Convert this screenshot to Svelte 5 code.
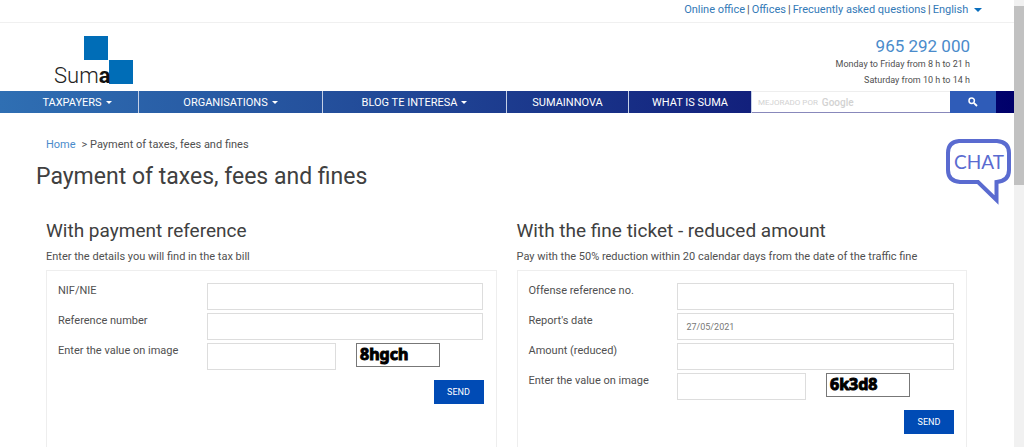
<script>
    const topLinks = ['Online office', 'Offices', 'Frecuently asked questions'];

    const menu = [
        { label: 'TAXPAYERS', dropdown: true },
        { label: 'ORGANISATIONS', dropdown: true },
        { label: 'BLOG TE INTERESA', dropdown: true },
        { label: 'SUMAINNOVA', dropdown: false },
        { label: 'WHAT IS SUMA', dropdown: false }
    ];

    let forms = [
        {
            id: 'reference',
            title: 'With payment reference',
            description: 'Enter the details you will find in the tax bill',
            fields: [
                { name: 'nif', label: 'NIF/NIE', value: '' },
                { name: 'number', label: 'Reference number', value: '' }
            ],
            captcha: '8hgch',
            answer: ''
        },
        {
            id: 'ticket',
            title: 'With the fine ticket - reduced amount',
            description: 'Pay with the 50% reduction within 20 calendar days from the date of the traffic fine',
            fields: [
                { name: 'offense', label: 'Offense reference no.', value: '' },
                { name: 'date', label: "Report's date", value: '27/05/2021' },
                { name: 'amount', label: 'Amount (reduced)', value: '' }
            ],
            captcha: '6k3d8',
            answer: ''
        }
    ];
</script>

<div class="window">
    <div class="page">
        <div class="top-bar">
            {#each topLinks as link}
                <a href="#top">{link}</a><span class="sep">|</span>
            {/each}
            <button class="language">English <span class="caret"></span></button>
        </div>

        <header>
            <a href="#home" class="logo" aria-label="Suma">
                <svg width="80" height="54" viewBox="0 0 80 54">
                    <rect x="30" y="0" width="24" height="24" fill="#006db7" />
                    <rect x="55" y="24" width="24" height="24" fill="#006db7" />
                    <text x="0" y="47" font-size="22" font-weight="300" fill="#222">Sum<tspan font-weight="700" fill="#111">a</tspan></text>
                </svg>
            </a>
            <div class="contact">
                <a href="#phone" class="phone">965 292 000</a>
                <span>Monday to Friday from 8 h to 21 h</span>
                <span>Saturday from 10 h to 14 h</span>
            </div>
        </header>

        <nav>
            {#each menu as item}
                <a href="#menu" class="item">
                    {item.label}
                    {#if item.dropdown}<span class="caret"></span>{/if}
                </a>
            {/each}
            <label class="search">
                <span class="by">MEJORADO POR</span>
                <span class="google">Google</span>
                <input type="text" aria-label="Search" />
            </label>
            <button class="search-button" aria-label="Search">
                <svg width="10" height="10" viewBox="0 0 10 10" fill="none" stroke="#fff">
                    <circle cx="3.7" cy="3.7" r="2.7" stroke-width="1.5" />
                    <path d="M5.8 5.8L9 9" stroke-width="1.8" />
                </svg>
            </button>
        </nav>

        <main>
            <div class="breadcrumb">
                <a href="#home">Home</a>
                <span>&gt; Payment of taxes, fees and fines</span>
            </div>
            <h1>Payment of taxes, fees and fines</h1>

            <div class="columns">
                {#each forms as form}
                    <section>
                        <h2>{form.title}</h2>
                        <p>{form.description}</p>
                        <form on:submit|preventDefault>
                            {#each form.fields as field}
                                <div class="row">
                                    <label for="{form.id}-{field.name}">{field.label}</label>
                                    <input id="{form.id}-{field.name}" type="text" bind:value={field.value} />
                                </div>
                            {/each}
                            <div class="row">
                                <label for="{form.id}-captcha">Enter the value on image</label>
                                <div class="captcha">
                                    <input id="{form.id}-captcha" type="text" bind:value={form.answer} />
                                    <svg width="84" height="24" viewBox="0 0 84 24">
                                        <rect x="0.5" y="0.5" width="83" height="23" fill="#fff" stroke="#777" />
                                        <text x="4" y="17">{form.captcha}</text>
                                    </svg>
                                </div>
                            </div>
                            <button class="send">SEND</button>
                        </form>
                    </section>
                {/each}
            </div>
        </main>

        <button class="chat" aria-label="CHAT">
            <svg width="68" height="68" viewBox="0 0 68 68">
                <path
                    d="M14 3H52Q64 4 64 15V32Q64 43 51.5 44V62L33 44H15Q3 43 3 32V15Q3 4 14 3Z"
                    fill="#fff"
                    stroke="#5a6bd0"
                    stroke-width="4"
                />
                <text x="34" y="31" text-anchor="middle" font-size="19" fill="#5a6bd0">CHAT</text>
            </svg>
        </button>
    </div>
    <div class="scrollbar"><span class="thumb"></span></div>
</div>

<style>
:global(body) {
    margin: 0;
    background: #fff;
}
.window {
    display: flex;
    height: 100vh;
    overflow: hidden;
    font-family: Roboto, "Noto Sans", sans-serif;
    font-size: 11px;
    color: #505050;
}
.page {
    position: relative;
    display: flex;
    flex-direction: column;
    flex: 1;
    min-width: 0;
}
a {
    color: #337ab7;
    text-decoration: none;
}
button {
    font-family: inherit;
    border: none;
    padding: 0;
    cursor: pointer;
}
input {
    box-sizing: border-box;
    min-width: 0;
    font-family: inherit;
    outline: none;
}
.caret {
    display: inline-block;
    border: 3px solid transparent;
    border-top-color: currentColor;
    border-bottom: none;
    vertical-align: middle;
}
.top-bar {
    display: flex;
    justify-content: flex-end;
    align-items: center;
    height: 18px;
    padding: 0 32px 4px 0;
    border-bottom: 1px solid #f0f0f0;
}
.sep {
    margin: 0 2px;
}
.language {
    background: none;
    color: #337ab7;
    font-size: 11px;
}
.language .caret {
    margin-left: 3px;
    border-width: 4px;
    border-bottom: none;
    color: #0a6ebd;
}
header {
    display: flex;
    justify-content: space-between;
    height: 55px;
    padding: 13px 44px 0 54px;
}
.contact {
    display: flex;
    flex-direction: column;
    align-items: flex-end;
    font-size: 9px;
    line-height: 16px;
}
.phone {
    color: #4a8bcb;
    font-size: 17px;
    line-height: 20px;
}
nav {
    display: grid;
    grid-template-columns: 139fr 184fr 184fr 122fr 123fr 198fr 46fr 18fr;
    height: 22px;
    background: linear-gradient(to right, #2f6fb3, #24509c 32%, #12207c 74%, #00006a);
}
.item {
    display: flex;
    align-items: center;
    justify-content: center;
    gap: 4px;
    min-width: 0;
    border-right: 1px solid #c5d0e6;
    color: #fff;
    white-space: nowrap;
}
.item:first-child {
    padding-left: 16px;
}
.search {
    display: flex;
    align-items: center;
    gap: 4px;
    min-width: 0;
    padding-left: 6px;
    background: #fff;
    border-top: 1px solid #eee;
    border-bottom: 1px solid #8888bb;
    color: #d2d2d2;
}
.by {
    font-size: 8px;
    white-space: nowrap;
}
.google {
    font-size: 10px;
    font-weight: 500;
}
.search input {
    flex: 1;
    width: 0;
    padding: 0;
    border: none;
}
.search-button {
    background: #2f5cb8;
}
main {
    display: flex;
    flex-direction: column;
    flex: 1;
    padding: 24px 47px 0 46px;
}
.breadcrumb {
    display: flex;
    gap: 6px;
    line-height: 16px;
}
.breadcrumb a {
    color: #4a8bcb;
}
h1 {
    margin: 8px 0 0 -10px;
    font-size: 23px;
    line-height: 32px;
    font-weight: 400;
    color: #404040;
}
.columns {
    display: flex;
    flex: 1;
    gap: 20px;
    margin-top: 24px;
}
section {
    display: flex;
    flex-direction: column;
    flex: 1 1 0;
    min-width: 0;
}
h2 {
    margin: 0;
    font-size: 19px;
    line-height: 28px;
    font-weight: 400;
    color: #404040;
}
p {
    margin: 0;
    padding: 4px 0 5px;
    line-height: 16px;
    white-space: nowrap;
}
form {
    display: flex;
    flex-direction: column;
    flex: 1;
    gap: 3px;
    padding: 12px 12px 0 11px;
    border: 1px solid #eee;
    border-bottom: none;
}
.row {
    display: grid;
    grid-template-columns: 35% 65%;
    height: 27px;
}
.row label {
    line-height: 16px;
}
.row input {
    width: 100%;
    height: 27px;
    padding: 0 8px;
    border: 1px solid #ddd;
    color: #777;
    font-size: 9px;
}
.captcha {
    display: flex;
    gap: 20px;
}
.captcha input {
    width: 129px;
}
.captcha text {
    font-family: "Noto Sans", sans-serif;
    font-size: 16px;
    font-weight: 700;
    fill: #000;
    stroke: #000;
    stroke-width: 1px;
}
.send {
    align-self: flex-end;
    width: 50px;
    height: 24px;
    margin-top: 7px;
    background: #004bb5;
    color: #fff;
    font-size: 9px;
}
.chat {
    position: absolute;
    top: 138px;
    right: 1px;
    background: none;
}
.chat svg {
    display: block;
}
.chat text {
    font-family: Lato, sans-serif;
}
.scrollbar {
    width: 10px;
    padding-top: 6px;
    background: #f1f1f1;
}
.thumb {
    display: block;
    height: 179px;
    background: #c1c1c1;
}
</style>
